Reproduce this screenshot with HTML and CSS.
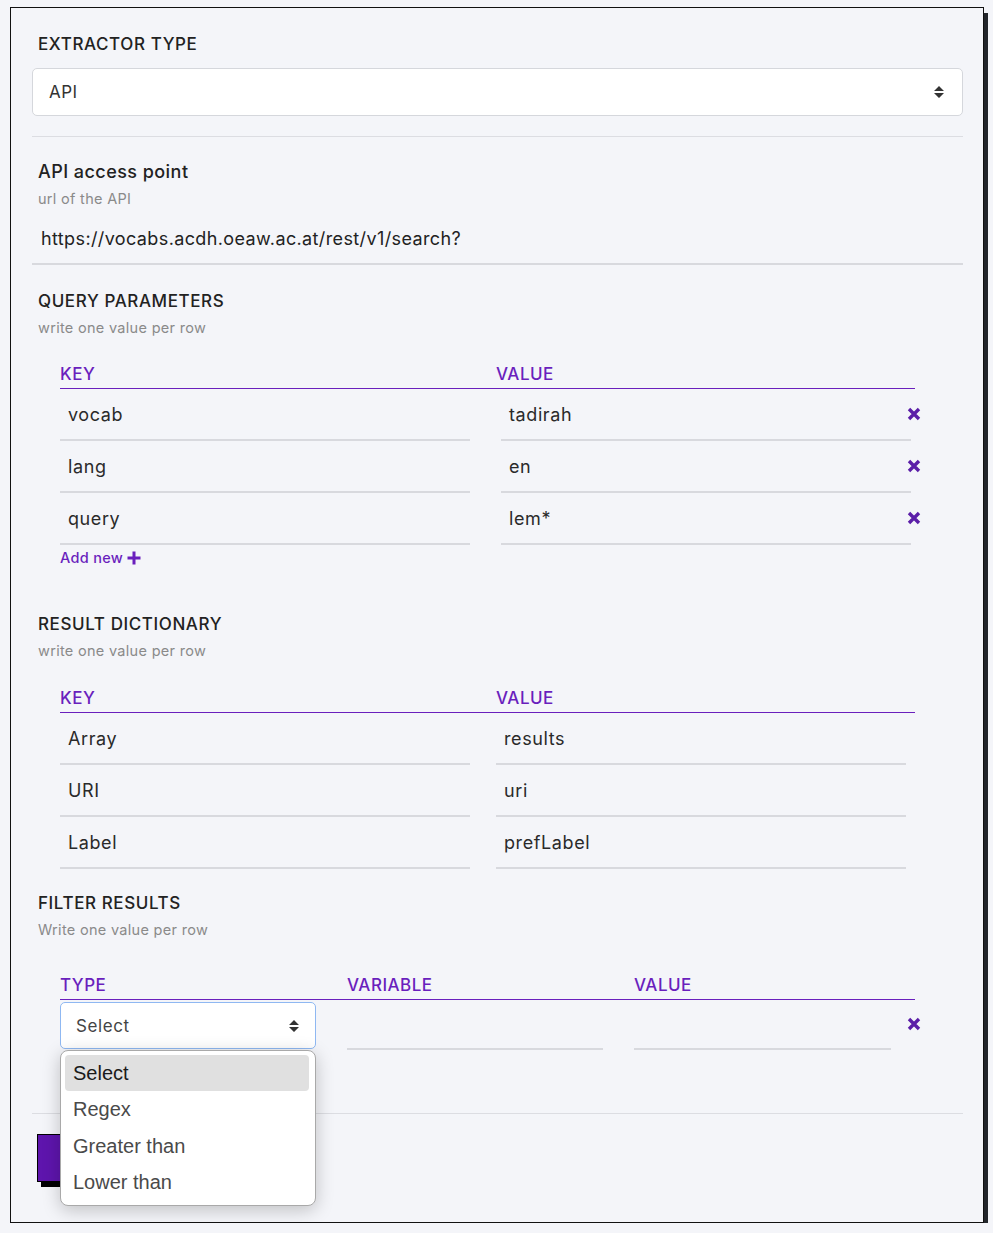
FILE: index.html
```html
<!DOCTYPE html>
<html lang="en">
<head>
<meta charset="utf-8">
<title>Extractor</title>
<link rel="stylesheet" href="styles.css">
</head>
<body>
<div class="card">
  <section class="sec sec-first">
    <h2 class="heading">EXTRACTOR TYPE</h2>
    <div class="select select-big">
      <span>API</span>
      <svg class="sort" width="10" height="12" viewBox="0 0 10 12"><path d="M0 5 L5 0 L10 5 Z M0 7 L5 12 L10 7 Z"/></svg>
    </div>
  </section>
  <hr class="divider">

  <section class="sec">
    <h3 class="title">API access point</h3>
    <p class="hint">url of the API</p>
    <div class="url-input">https://vocabs.acdh.oeaw.ac.at/rest/v1/search?</div>
  </section>

  <section class="sec sec-query">
    <h2 class="heading">QUERY PARAMETERS</h2>
    <p class="hint">write one value per row</p>
    <div class="kv-table">
      <div class="kv-head"><span>KEY</span><span>VALUE</span></div>
      <div class="kv-row">
        <div class="field key">vocab</div>
        <div class="val-cell"><div class="field val shifted">tadirah</div><svg class="xicon" width="14" height="14" viewBox="0 0 14 14"><path d="M2 2 L12 12 M12 2 L2 12"/></svg></div>
      </div>
      <div class="kv-row">
        <div class="field key">lang</div>
        <div class="val-cell"><div class="field val shifted">en</div><svg class="xicon" width="14" height="14" viewBox="0 0 14 14"><path d="M2 2 L12 12 M12 2 L2 12"/></svg></div>
      </div>
      <div class="kv-row">
        <div class="field key">query</div>
        <div class="val-cell"><div class="field val shifted">lem*</div><svg class="xicon" width="14" height="14" viewBox="0 0 14 14"><path d="M2 2 L12 12 M12 2 L2 12"/></svg></div>
      </div>
      <div class="add-new">Add new <svg class="plus" width="14" height="14" viewBox="0 0 14 14"><path d="M7 0.5 V13.5 M0.5 7 H13.5"/></svg></div>
    </div>
  </section>

  <section class="sec sec-result">
    <h2 class="heading">RESULT DICTIONARY</h2>
    <p class="hint">write one value per row</p>
    <div class="kv-table">
      <div class="kv-head"><span>KEY</span><span>VALUE</span></div>
      <div class="kv-row">
        <div class="field key">Array</div>
        <div class="val-cell"><div class="field val">results</div></div>
      </div>
      <div class="kv-row">
        <div class="field key">URI</div>
        <div class="val-cell"><div class="field val">uri</div></div>
      </div>
      <div class="kv-row">
        <div class="field key">Label</div>
        <div class="val-cell"><div class="field val">prefLabel</div></div>
      </div>
    </div>
  </section>

  <section class="sec sec-filter">
    <h2 class="heading">FILTER RESULTS</h2>
    <p class="hint">Write one value per row</p>
    <div class="kv-table">
      <div class="f-head"><span>TYPE</span><span>VARIABLE</span><span>VALUE</span></div>
      <div class="f-row">
        <div class="f-type">
          <div class="select select-small">
            <span>Select</span>
            <svg class="sort" width="10" height="12" viewBox="0 0 10 12"><path d="M0 5 L5 0 L10 5 Z M0 7 L5 12 L10 7 Z"/></svg>
          </div>
          <ul class="dropdown">
            <li class="opt active">Select</li>
            <li class="opt">Regex</li>
            <li class="opt">Greater than</li>
            <li class="opt">Lower than</li>
          </ul>
        </div>
        <div class="field f-field"></div>
        <div class="val-cell"><div class="field f-field f-last"></div><svg class="xicon x-filter" width="14" height="14" viewBox="0 0 14 14"><path d="M2 2 L12 12 M12 2 L2 12"/></svg></div>
      </div>
    </div>
  </section>

  <hr class="divider divider-bottom">
  <button class="save-btn" type="button" aria-label="Save"></button>
</div>
</body>
</html>
```

FILE: styles.css
```css
* { box-sizing: border-box; }

html, body {
  margin: 0;
  padding: 0;
  background: #f4f5f9;
}

body {
  font-family: Inter, "Noto Sans", sans-serif;
  color: #222;
}

.card {
  margin: 7px 0 0 10px;
  width: 974px;
  height: 1216px;
  border: 1px solid #111;
  background: #f4f5f9;
  box-shadow: 4px 6px 0 #23262b;
  padding: 0 20px 40px 21px;
}

.sec { margin: 0; }

.heading {
  margin: 0;
  padding: 22px 0 0 6px;
  font-size: 17px;
  line-height: 24px;
  font-weight: 500;
  letter-spacing: 0.6px;
  color: #222;
}

.sec-first .heading { padding-top: 24px; }
.sec-query .heading { padding-top: 24px; }
.sec-result .heading { padding-top: 44px; }
.sec-filter .heading { padding-top: 22px; }

.title {
  margin: 0;
  padding: 23px 0 0 6px;
  font-size: 18px;
  line-height: 24px;
  font-weight: 500;
  letter-spacing: 0.45px;
  color: #222;
}

.hint {
  margin: 6px 0 0;
  padding-left: 6px;
  font-size: 14.5px;
  line-height: 18px;
  letter-spacing: 0.3px;
  color: #8a8a8a;
}

.select {
  display: flex;
  align-items: center;
  justify-content: space-between;
  background: #fff;
  border-radius: 5px;
}

.select-big {
  margin-top: 12px;
  height: 48px;
  border: 1px solid #d5d7dc;
  padding: 0 18px 0 16px;
  font-size: 17px;
  letter-spacing: 0.4px;
  color: #333;
}

.sort { fill: #333; }

.divider {
  margin: 20px 0 0;
  border: 0;
  border-top: 1px solid #dcdde2;
  height: 0;
}

.url-input {
  margin-top: 5px;
  height: 52px;
  display: flex;
  align-items: center;
  padding-left: 9px;
  border-bottom: 2px solid #d8d9de;
  font-size: 18px;
  letter-spacing: 0.38px;
  color: #222;
}

.kv-table {
  margin: 0 48px 0 28px;
}

.kv-head {
  margin-top: 27px;
  display: grid;
  grid-template-columns: 436px 1fr;
  padding: 1px 0 4px;
  line-height: 20px;
  font-size: 17px;
  font-weight: 500;
  letter-spacing: 0.5px;
  color: #6a1fbd;
  border-bottom: 1px solid #6a1fbd;
}

.sec-query .kv-head { margin-top: 26px; }

.kv-row {
  display: grid;
  grid-template-columns: 436px 1fr;
}

.field {
  height: 52px;
  display: flex;
  align-items: center;
  padding-left: 8px;
  border-bottom: 2px solid #d8d9de;
  font-size: 18px;
  letter-spacing: 0.6px;
  color: #2a2a2a;
}

.key { width: 410px; }

.val-cell {
  display: flex;
  align-items: center;
}

.val { width: 410px; }
.val.shifted { margin-left: 5px; }

.xicon {
  flex: none;
  margin-left: -4px;
  margin-top: -3px;
  stroke: #5b1ea8;
  stroke-width: 3.4;
  fill: none;
}

.add-new {
  margin-top: 3px;
  display: flex;
  align-items: center;
  gap: 4px;
  line-height: 20px;
  font-size: 14.5px;
  font-weight: 500;
  color: #6a1fbd;
  letter-spacing: 0.3px;
}

.plus {
  stroke: #6a1fbd;
  stroke-width: 3;
  fill: none;
}

.f-head {
  margin-top: 35px;
  display: grid;
  grid-template-columns: 287px 287px 1fr;
  padding: 1px 0 4px;
  line-height: 20px;
  font-size: 17px;
  font-weight: 500;
  letter-spacing: 0.5px;
  color: #6a1fbd;
  border-bottom: 1px solid #6a1fbd;
}

.f-row {
  display: grid;
  grid-template-columns: 287px 287px 1fr;
  align-items: start;
}

.f-type {
  position: relative;
  padding-top: 2px;
}

.select-small {
  width: 256px;
  height: 47px;
  border: 1px solid #8fb8f2;
  padding: 0 16px 0 15px;
  font-size: 17px;
  color: #444;
  letter-spacing: 0.6px;
}

.f-field {
  width: 256px;
  height: 50px;
}

.f-last { width: 257px; }

.x-filter { margin-left: 16px; margin-top: -3px; }

.dropdown {
  position: absolute;
  top: 50px;
  left: 0;
  width: 256px;
  height: 156px;
  margin: 0;
  padding: 4px 6px 4px 4px;
  list-style: none;
  background: #fff;
  border: 1px solid #a9a9a9;
  border-radius: 8px;
  box-shadow: 0 4px 18px rgba(0, 0, 0, 0.22);
  font-family: "Liberation Sans", Arial, sans-serif;
  font-size: 20px;
  color: #4a4a4a;
  z-index: 2;
}

.opt {
  height: 36.4px;
  line-height: 36px;
  padding-left: 8px;
  border-radius: 4px;
}

.opt.active {
  background: #e0e0e0;
  color: #1a1a1a;
}

.divider-bottom { margin-top: 63px; }

.save-btn {
  display: block;
  margin: 20px 0 0 5px;
  width: 100px;
  height: 48px;
  border: 1px solid #000;
  background: #5e15ad;
  box-shadow: 4px 5px 0 #000;
  border-radius: 0;
  padding: 0;
}
```
